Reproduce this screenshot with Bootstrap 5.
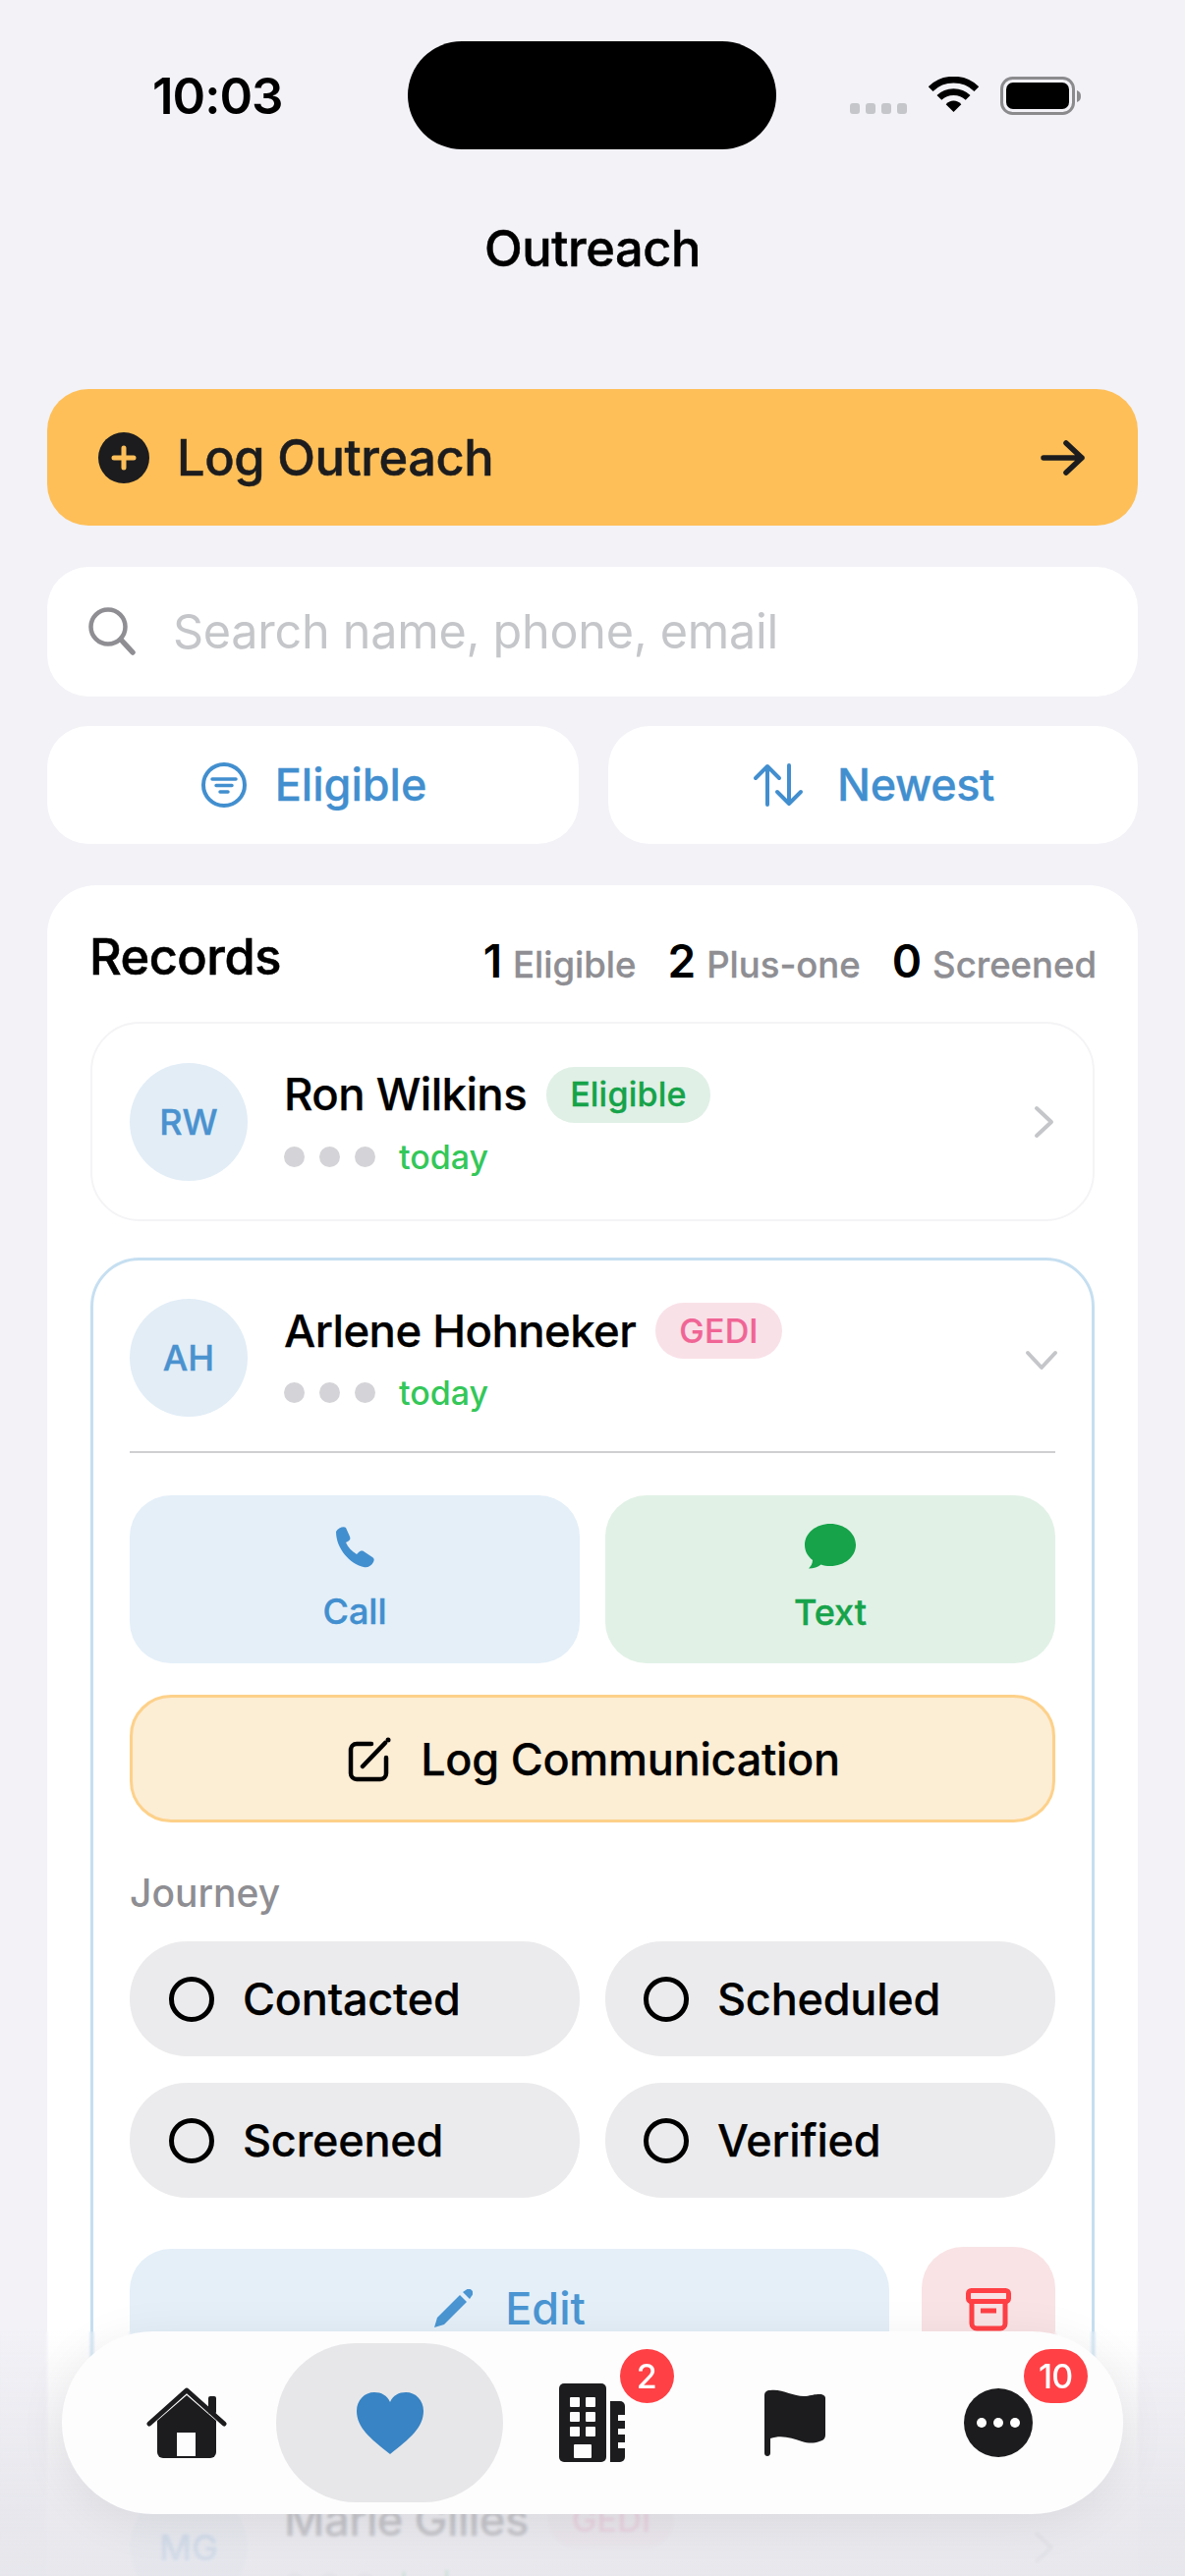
<!DOCTYPE html>
<html lang="en">
<head>
<meta charset="utf-8">
<title>Outreach</title>
<link href="https://cdn.jsdelivr.net/npm/bootstrap@5.3.0/dist/css/bootstrap.min.css" rel="stylesheet">
<style>
html,body{margin:0;background:#f2f2f7}
body{font-family:Inter,"Liberation Sans",sans-serif;color:#000;width:1206px;height:2622px;overflow:hidden}
.o-screen{position:relative;width:1206px;height:2622px;overflow:hidden;background:#f2f2f7}
.o-status{height:152px;padding-top:42px}
.o-time{width:415px;padding-left:155px;font-size:51px;font-weight:600;letter-spacing:-1px;line-height:112px}
.o-island{width:375px;height:110px;background:#000;border-radius:55px}
.o-statusr{width:416px;padding-left:75px;padding-top:36px;height:110px}
.o-cells{gap:6px;margin-top:27px;margin-right:22px;height:11px}
.o-cell{width:10px;height:11px;background:#c4c6c9;border-radius:3px}
.o-wifi{margin-right:22px}
.o-title{height:202px;font-size:50.500px;font-weight:500;letter-spacing:-.4px;-webkit-text-stroke:.5px #000}
.o-main{padding:42px 48px 0}
.o-primary{height:139px;border-radius:42px;background:#febf58;padding:0 53px 0 52px;margin-bottom:42px;font-size:50.500px;font-weight:500;letter-spacing:-.4px;color:#1c1c1e;gap:28px;-webkit-text-stroke:.5px #1c1c1e}
.o-search{height:132px;border-radius:42px;padding:0 42px;gap:38px;margin-bottom:30px;font-size:48.500px;color:#c4c6c9;letter-spacing:-.25px}
.o-filters{gap:30px;margin-bottom:42px}
.o-filter{flex:1 1 0;height:120px;border-radius:42px;color:#428fcf;font-size:45px;font-weight:500;gap:29px;-webkit-text-stroke:.3px #428fcf}
.o-filter-a{padding-left:2px}
.o-filter-b{gap:33px;letter-spacing:-.4px}
.o-panel{border-radius:50px;padding:48px 44px 0;height:1800px}
.o-panelhead{height:50px;margin-bottom:41px}
.o-h{font-size:50.500px;font-weight:500;letter-spacing:-.5px;line-height:50px;margin-left:-1px;-webkit-text-stroke:.6px #000}
.o-stats{font-size:36.500px;font-weight:500;color:#8e8e93;gap:32px;padding-top:8px;margin-right:-2px;-webkit-text-stroke:.3px #8e8e93}
.o-stats b{font-size:46px;font-weight:600;color:#000;margin-right:11px;-webkit-text-stroke:0}
.o-rec{border:2px solid #f4f4f6;border-radius:50px;height:203px;padding:0 38px;margin-bottom:37px}
.o-open{border:3px solid #c6dff1;height:1174px;padding:39px 37px 0;display:block}
.o-avatar{width:120px;height:120px;border-radius:50%;background:#e2edf6;color:#4a92cf;font-size:36px;font-weight:500;flex:none;-webkit-text-stroke:.4px #4a92cf}
.o-recbody{margin-left:37px;flex:1 1 auto}
.o-name{font-size:45.500px;font-weight:500;letter-spacing:-.55px;line-height:60px;height:60px;gap:20px;-webkit-text-stroke:.25px #000}
.o-tag{height:57px;border-radius:29px;font-size:34px;font-weight:500;padding:0 24px;letter-spacing:.2px}
.o-tag-g{background:#e0f0e6;color:#16a34a;-webkit-text-stroke:.3px #16a34a}
.o-tag-p{background:#f9e1e8;color:#f06595;-webkit-text-stroke:.2px #f06595}
.o-meta{gap:15px;height:44px;margin-top:11px;color:#34c759;font-size:34px;font-weight:500}
.o-dot{width:21px;height:21px;border-radius:50%;background:#d4d4d8}
.o-today{margin-left:9px}
.o-chev{margin-right:-3px;margin-top:6px}
.o-rule{height:2px;background:#cfcfd2;margin:35px 0 43px}
.o-actions{gap:26px;margin-bottom:32px}
.o-act{flex:1 1 0;height:171px;padding-top:4px;border-radius:42px;font-size:36px;font-weight:500;gap:17px}
.o-act-b{background:#e4eff8;color:#428fcf;-webkit-text-stroke:.4px #428fcf}
.o-act-g{background:#e1f1e6;color:#16a34a;-webkit-text-stroke:.4px #16a34a}
.o-log{height:130px;border:3px solid #fdd18a;border-radius:42px;padding:2px 0 0 3px;background:#fcedd5;font-size:45px;font-weight:500;gap:30px;margin-bottom:50px;letter-spacing:-.25px;-webkit-text-stroke:.25px #000}
.o-label{font-size:39px;font-weight:500;color:#8e8e93;line-height:44px;margin-bottom:27px}
.o-journey{display:grid;grid-template-columns:1fr 1fr;gap:27px 26px;margin-bottom:50px}
.o-step{height:117px;border-radius:58px;background:#ebebed;font-size:45px;font-weight:500;padding-left:40px;gap:29px;letter-spacing:-.2px;-webkit-text-stroke:.25px #000}
.o-step:nth-child(even){padding-left:39px}
.o-ring{width:46px;height:46px;border-radius:50%;border:5px solid #000;flex:none}
.o-foot{gap:33px}
.o-edit{flex:1 1 auto;height:131px;margin-top:2px;padding-bottom:10px;border-radius:42px;background:#e4eff8;color:#4a95d2;font-size:45px;font-weight:500;gap:33px}
.o-bin{width:136px;height:133px;flex:none;padding-bottom:6px;border-radius:42px;background:#f9e3e5}
.o-noshrink{flex:none}
.o-fade{position:absolute;left:0;right:0;top:2373px;height:249px;background:linear-gradient(to bottom,rgba(229,229,235,0),rgba(229,229,235,.84) 72%,rgba(229,229,235,.9));-webkit-backdrop-filter:blur(1.500px);backdrop-filter:blur(1.500px);pointer-events:none}
.o-nav{position:absolute;left:63px;top:2373px;width:1080px;height:186px;border-radius:93px;background:#fdfdfe;box-shadow:0 8px 50px rgba(0,0,0,.07);padding:12px 24px;display:grid;grid-template-columns:repeat(5,1fr)}
.o-tab{position:relative;height:162px}
.o-tab-on{background:#e7e7e9;border-radius:81px;margin:0 -12px}
.o-count{position:absolute;top:6px;height:55px;border-radius:28px;background:#ff4045;color:#fff;font-size:34px;font-weight:500}
.o-count-1{left:131px;width:55px}
.o-count-2{left:129px;width:65px;letter-spacing:-1px}
</style>
</head>
<body>
<div class="o-screen">
  <div class="o-status d-flex">
    <div class="o-time">10:03</div>
    <div class="o-island"></div>
    <div class="o-statusr d-flex align-items-start">
      <div class="o-cells d-flex"><span class="o-cell"></span><span class="o-cell"></span><span class="o-cell"></span><span class="o-cell"></span></div>
      <svg width="51" height="37" viewBox="0 0 52 38" class="o-wifi"><path d="M2 13C15 0 37 0 50 13" fill="none" stroke="#000" stroke-width="7"/><path d="M11 22c8-8 22-8 30 0" fill="none" stroke="#000" stroke-width="7"/><path d="M18 29c4-5 12-5 16 0l-8 8z" fill="#000"/></svg>
      <svg width="83" height="39" viewBox="0 0 83 39"><rect x="1.500" y="1.500" width="73" height="36" rx="11" fill="none" stroke="#8b8b8e" stroke-width="3"/><rect x="6" y="6" width="64" height="27" rx="7" fill="#000"/><path d="M78 14c3 1 4 3 4 6s-1 5-4 6z" fill="#8b8b8e"/></svg>
    </div>
  </div>
  <div class="o-title d-flex align-items-center justify-content-center">Outreach</div>
  <div class="o-main">
    <div class="o-primary d-flex align-items-center">
      <svg width="52" height="52" viewBox="0 0 52 52" class="o-noshrink"><circle cx="26" cy="26" r="26" fill="#1c1c1e"/><path d="M26 16v20M16 26h20" stroke="#febf58" stroke-width="5" stroke-linecap="round"/></svg>
      <span class="flex-grow-1">Log Outreach</span>
      <svg width="46" height="36" viewBox="0 0 46 36"><path d="M3 18h39M26 3l16 15-16 15" fill="none" stroke="#1c1c1e" stroke-width="5.500" stroke-linecap="round" stroke-linejoin="round"/></svg>
    </div>
    <div class="o-search d-flex align-items-center bg-white">
      <svg width="48" height="50" viewBox="0 0 48 50" class="o-noshrink"><circle cx="20" cy="20" r="17.500" fill="none" stroke="#8e8e93" stroke-width="4.500"/><path d="M33 33l12 13" stroke="#8e8e93" stroke-width="5.500" stroke-linecap="round"/></svg>
      <span>Search name, phone, email</span>
    </div>
    <div class="o-filters d-flex">
      <div class="o-filter o-filter-a d-flex align-items-center justify-content-center bg-white">
        <svg width="46" height="46" viewBox="0 0 46 46"><circle cx="23" cy="23" r="21" fill="none" stroke="#428fcf" stroke-width="4"/><path d="M11 17h24M15 23.500h16M19 30h8" stroke="#428fcf" stroke-width="3.500" stroke-linecap="round"/></svg>
        <span>Eligible</span>
      </div>
      <div class="o-filter o-filter-b d-flex align-items-center justify-content-center bg-white">
        <svg width="54" height="44" viewBox="0 0 52 44"><path d="M15 42V3M3 15L15 3l12 12M37 2v39M25 29l12 12 12-12" fill="none" stroke="#428fcf" stroke-width="4" stroke-linecap="round" stroke-linejoin="round"/></svg>
        <span>Newest</span>
      </div>
    </div>
    <div class="o-panel bg-white">
      <div class="o-panelhead d-flex justify-content-between align-items-center">
        <div class="o-h">Records</div>
        <div class="o-stats d-flex align-items-baseline"><span><b>1</b>Eligible</span><span><b>2</b>Plus-one</span><span><b>0</b>Screened</span></div>
      </div>
      <div class="o-rec d-flex align-items-center">
        <div class="o-avatar d-flex align-items-center justify-content-center">RW</div>
        <div class="o-recbody">
          <div class="o-name d-flex align-items-center"><span>Ron Wilkins</span><span class="o-tag o-tag-g d-flex align-items-center">Eligible</span></div>
          <div class="o-meta d-flex align-items-center"><span class="o-dot"></span><span class="o-dot"></span><span class="o-dot"></span><span class="o-today">today</span></div>
        </div>
        <svg width="22" height="34" viewBox="0 0 22 34"><path d="M3 3l15 14L3 31" fill="none" stroke="#c4c6c9" stroke-width="4" stroke-linecap="round" stroke-linejoin="round"/></svg>
      </div>
      <div class="o-rec o-open">
        <div class="d-flex align-items-center">
          <div class="o-avatar d-flex align-items-center justify-content-center">AH</div>
          <div class="o-recbody">
            <div class="o-name d-flex align-items-center"><span>Arlene Hohneker</span><span class="o-tag o-tag-p d-flex align-items-center">GEDI</span></div>
            <div class="o-meta d-flex align-items-center"><span class="o-dot"></span><span class="o-dot"></span><span class="o-dot"></span><span class="o-today">today</span></div>
          </div>
          <svg width="34" height="22" viewBox="0 0 34 22" class="o-chev"><path d="M3 3l14 15L31 3" fill="none" stroke="#c4c6c9" stroke-width="4" stroke-linecap="round" stroke-linejoin="round"/></svg>
        </div>
        <div class="o-rule"></div>
        <div class="o-actions d-flex">
          <div class="o-act o-act-b d-flex flex-column align-items-center justify-content-center">
            <svg width="44" height="44" viewBox="0 0 44 44"><path d="M3 7c2-4 8-6 10-4l4 9c1 2 0 4-2 5l-2 1c2 5 6 9 11 12l2-2c1-1 3-2 5-1l9 6c2 1 2 3 1 5-2 4-6 6-10 5C17 40 3 24 3 7z" fill="#428fcf"/></svg>
            <span>Call</span>
          </div>
          <div class="o-act o-act-g d-flex flex-column align-items-center justify-content-center">
            <svg width="54" height="46" viewBox="0 0 54 46"><path d="M27 0c14.500 0 26 9.500 26 21.500S41.500 43 27 43c-3.500 0-6.500-.5-9.500-1.500C14.500 44 10 45.500 5 45.500c2.500-2.500 3.800-5 4-8.500C4 33 1 28 1 21.500 1 9.500 12.500 0 27 0z" fill="#16a34a"/></svg>
            <span>Text</span>
          </div>
        </div>
        <div class="o-log d-flex align-items-center justify-content-center">
          <svg width="44" height="46" viewBox="0 0 44 46"><path d="M24 7H9a6 6 0 0 0-6 6v24a6 6 0 0 0 6 6h24a6 6 0 0 0 6-6V21" fill="none" stroke="#000" stroke-width="4.500" stroke-linecap="round"/><path d="M15 30L38 6" stroke="#000" stroke-width="4.500" stroke-linecap="round"/><circle cx="41" cy="3" r="2.500" fill="#000"/></svg>
          <span>Log Communication</span>
        </div>
        <div class="o-label">Journey</div>
        <div class="o-journey">
          <div class="o-step d-flex align-items-center"><span class="o-ring"></span><span>Contacted</span></div>
          <div class="o-step d-flex align-items-center"><span class="o-ring"></span><span>Scheduled</span></div>
          <div class="o-step d-flex align-items-center"><span class="o-ring"></span><span>Screened</span></div>
          <div class="o-step d-flex align-items-center"><span class="o-ring"></span><span>Verified</span></div>
        </div>
        <div class="o-foot d-flex">
          <div class="o-edit d-flex align-items-center justify-content-center">
            <svg width="40" height="40" viewBox="0 0 40 40"><path d="M1 39l3-10L27 6l7 7-23 23z" fill="#4a95d2"/><path d="M30 3l3-2a3 3 0 0 1 6 6l-2 3z" fill="#4a95d2"/></svg>
            <span>Edit</span>
          </div>
          <div class="o-bin d-flex align-items-center justify-content-center">
            <svg width="46" height="44" viewBox="0 0 46 44"><rect x="2.500" y="2.500" width="41" height="11" rx="3" fill="none" stroke="#ff4045" stroke-width="5"/><path d="M6 14v22a5 5 0 0 0 5 5h24a5 5 0 0 0 5-5V14" fill="none" stroke="#ff4045" stroke-width="5"/><path d="M15 23h16" stroke="#ff4045" stroke-width="5"/></svg>
          </div>
        </div>
      </div>
      <div class="o-rec d-flex align-items-center">
        <div class="o-avatar d-flex align-items-center justify-content-center">MG</div>
        <div class="o-recbody">
          <div class="o-name d-flex align-items-center"><span>Marie Gilles</span><span class="o-tag o-tag-p d-flex align-items-center">GEDI</span></div>
          <div class="o-meta d-flex align-items-center"><span class="o-dot"></span><span class="o-dot"></span><span class="o-dot"></span><span class="o-today">today</span></div>
        </div>
        <svg width="22" height="34" viewBox="0 0 22 34"><path d="M3 3l15 14L3 31" fill="none" stroke="#c4c6c9" stroke-width="4" stroke-linecap="round" stroke-linejoin="round"/></svg>
      </div>
    </div>
  </div>
  <div class="o-fade"></div>
  <nav class="o-nav">
    <div class="o-tab d-flex align-items-center justify-content-center">
      <svg width="82" height="72" viewBox="0 0 82 72"><path d="M11 34L41 8l30 26v32a6 6 0 0 1-6 6H17a6 6 0 0 1-6-6z" fill="#1c1c1e"/><rect x="31" y="46" width="19" height="24" fill="#fdfdfe"/><path d="M3 37L41 3l38 34" fill="none" stroke="#1c1c1e" stroke-width="5" stroke-linecap="round" stroke-linejoin="round"/><rect x="63" y="9" width="8" height="18" rx="2" fill="#1c1c1e"/></svg>
    </div>
    <div class="o-tab o-tab-on d-flex align-items-center justify-content-center">
      <svg width="68" height="63" viewBox="0 0 68 63"><path d="M34 63C14 47 0 36 0 19 0 8 8 0 18 0c7 0 13 3 16 10C37 3 43 0 50 0c10 0 18 8 18 19 0 17-14 28-34 44z" fill="#3884c4"/></svg>
    </div>
    <div class="o-tab d-flex align-items-center justify-content-center">
      <svg width="68" height="80" viewBox="0 0 68 80"><rect x="0" y="0" width="48" height="80" rx="5" fill="#1c1c1e"/><g fill="#fdfdfe"><rect x="11" y="14" width="10" height="10" rx="1"/><rect x="27" y="14" width="10" height="10" rx="1"/><rect x="11" y="29" width="10" height="10" rx="1"/><rect x="27" y="29" width="10" height="10" rx="1"/><rect x="11" y="44" width="10" height="10" rx="1"/><rect x="27" y="44" width="10" height="10" rx="1"/><rect x="15" y="62" width="18" height="14" rx="1"/></g><path d="M52 18h10a5 5 0 0 1 5 5v52a5 5 0 0 1-5 5H52z" fill="#1c1c1e"/><g fill="#fdfdfe"><rect x="60" y="32" width="8" height="6"/><rect x="60" y="46" width="8" height="6"/><rect x="60" y="60" width="8" height="6"/></g></svg>
      <span class="o-count o-count-1 d-flex align-items-center justify-content-center">2</span>
    </div>
    <div class="o-tab d-flex align-items-center justify-content-center">
      <svg width="62" height="68" viewBox="0 0 62 68"><path d="M0 6c0-3 2-5 6-5 12-2 24 7 36 6 6-1 9-2 14-2 4 0 6 2 6 4v37c0 4-2 6-6 7-6 2-11 2-18 0-10-3-20-7-32-3v15c0 4-6 4-6 0z" fill="#1c1c1e"/></svg>
    </div>
    <div class="o-tab d-flex align-items-center justify-content-center">
      <svg width="70" height="70" viewBox="0 0 70 70"><circle cx="35" cy="35" r="35" fill="#1c1c1e"/><circle cx="18" cy="35" r="5" fill="#fff"/><circle cx="35" cy="35" r="5" fill="#fff"/><circle cx="52" cy="35" r="5" fill="#fff"/></svg>
      <span class="o-count o-count-2 d-flex align-items-center justify-content-center">10</span>
    </div>
  </nav>
</div>
<script src="https://cdn.jsdelivr.net/npm/bootstrap@5.3.0/dist/js/bootstrap.bundle.min.js"></script>
</body>
</html>
